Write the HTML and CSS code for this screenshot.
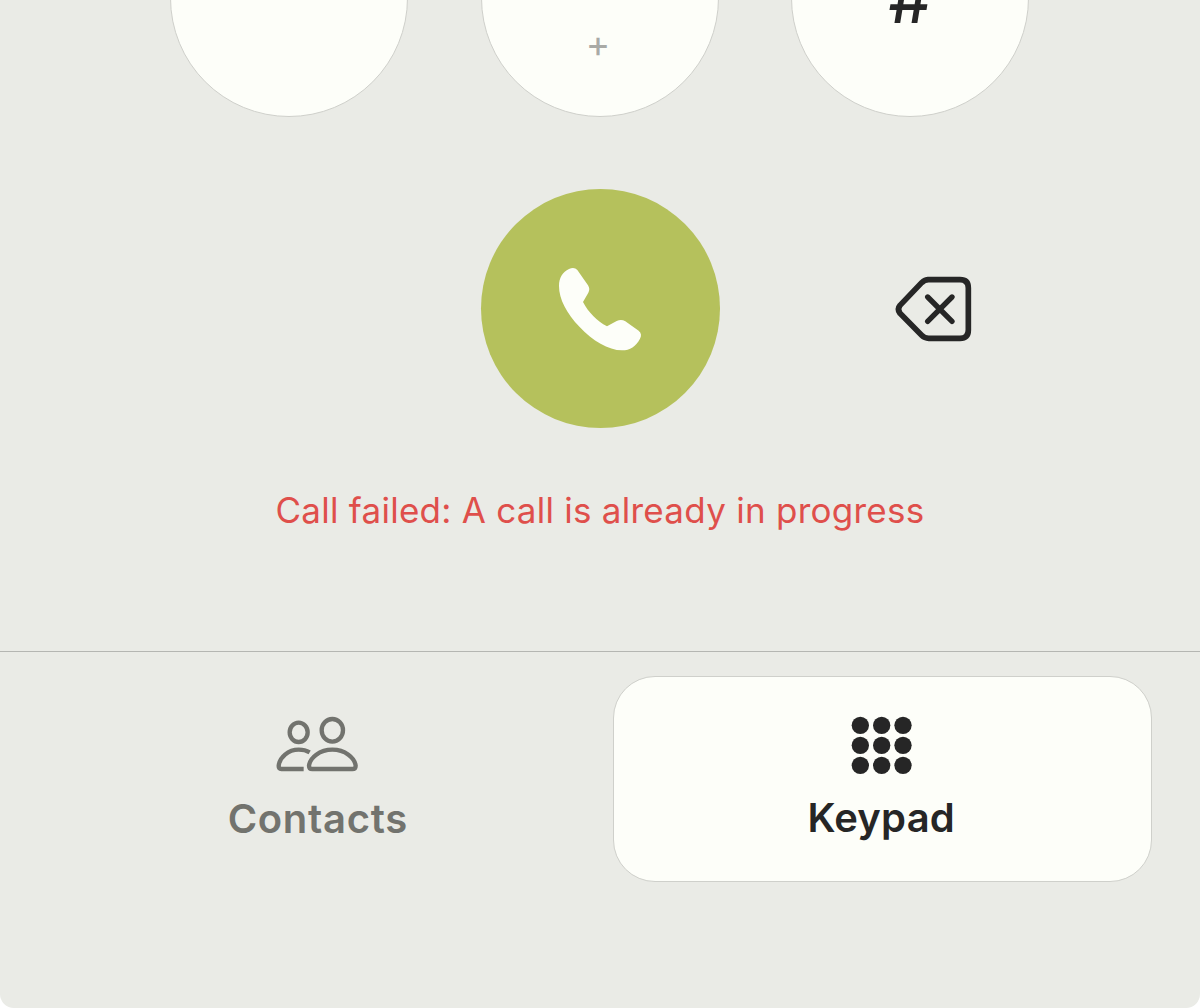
FILE: index.html
```html
<!DOCTYPE html>
<html lang="en">
<head>
  <meta charset="UTF-8" />
  <meta name="viewport" content="width=device-width, initial-scale=1.0" />
  <title>Keypad</title>
  <link rel="stylesheet" href="styles.css">
</head>
<body>

  <div class="phone">
    <div class="dialer">
      <div class="keys">
        <div class="key"></div>
        <div class="key"><span class="plus">+</span></div>
        <div class="key"><span class="hash">#</span></div>
      </div>

      <div class="actions">
        <button class="call-btn" aria-label="Call">
          <svg width="120" height="120" viewBox="0 -3 360 360">
            <path fill="#fdfef9" d="M87 57C97 52 106 53 112 60L144 106C149 114 149 120 145 128L129 156C145 187 171 213 201 229L230 213C240 208 248 209 256 214L296 242C304 248 305 257 300 266C288 289 270 301 246 301C205 301 158 272 119 231C80 191 57 147 57 108C57 83 68 66 87 57Z" />
          </svg>
        </button>
        <button class="delete-btn" aria-label="Delete">
          <svg width="110" height="100" viewBox="0 0 330 300" fill="none" stroke="#262626" stroke-linecap="round" stroke-linejoin="round">
            <path stroke-width="17" d="M143 59H240Q265 59 265 84V210Q265 235 240 235H146Q134 235 125 226L60 160Q50 148 60 136L125 68Q134 59 146 59Z" />
            <path stroke-width="16" d="M143 111L216 184M216 111L143 184" />
          </svg>
        </button>
      </div>

      <div class="error">Call failed: A call is already in progress</div>
    </div>

    <div class="bottom-nav">
      <div class="nav-item">
        <svg width="120" height="90" viewBox="-6 0 360 270" fill="none" stroke="#72736e" stroke-width="13">
          <ellipse cx="116" cy="97" rx="27" ry="29" />
          <ellipse cx="217" cy="91" rx="32" ry="34" />
          <path d="M131 207H64Q56 207 56 198C58 172 85 149 116 149Q135 149 149 157" />
          <path d="M157 207H277Q287 207 287 197C284 173 255 149 217 149S150 173 147 197Q147 207 157 207Z" />
        </svg>
        <div class="label">Contacts</div>
      </div>
      <div class="nav-item active">
        <svg width="100" height="90" viewBox="6 0 300 270" fill="#262626">
          <circle cx="91" cy="76" r="26" />
          <circle cx="155" cy="76" r="26" />
          <circle cx="219" cy="76" r="26" />
          <circle cx="91" cy="136" r="26" />
          <circle cx="155" cy="136" r="26" />
          <circle cx="219" cy="136" r="26" />
          <circle cx="91" cy="196" r="26" />
          <circle cx="155" cy="196" r="26" />
          <circle cx="219" cy="196" r="26" />
        </svg>
        <div class="label">Keypad</div>
      </div>
    </div>
  </div>

</body>
</html>
```

FILE: styles.css
```css
body {
  margin: 0;
  background: #ffffff;
  font-family: Inter, sans-serif;
  color: #262626;
}

.phone {
  height: 1008px;
  background: #eaebe6;
  border-radius: 0 0 14px 14px;
  overflow: hidden;
}

.dialer {
  height: 651px;
  overflow: hidden;
}

/* only the lower half of the last key row is in view */
.keys {
  display: grid;
  grid-template-columns: repeat(3, 238px);
  justify-content: center;
  column-gap: 72.5px;
  margin-top: -121px;
  padding-right: 1px;
}

.key {
  height: 238px;
  box-sizing: border-box;
  border: 1.5px solid #cfd0cb;
  border-radius: 50%;
  background: #fdfef9;
  text-align: center;
}

.plus {
  display: block;
  margin-top: 141px;
  padding-right: 3px;
  font-size: 37px;
  font-weight: 400;
  line-height: 46px;
  color: #a9aaa6;
}

.hash {
  display: block;
  margin-top: 79px;
  font-size: 67px;
  font-weight: 500;
  line-height: 80px;
}

.actions {
  display: grid;
  grid-template-columns: repeat(3, 239px);
  justify-content: center;
  align-items: center;
  column-gap: 72px;
  margin-top: 72px;
}

button {
  border: none;
  padding: 0;
  background: none;
  cursor: pointer;
}

.call-btn {
  grid-column: 2;
  display: flex;
  align-items: center;
  justify-content: center;
  height: 239px;
  border-radius: 50%;
  background: #b5c15c;
}

.delete-btn {
  display: flex;
  justify-content: center;
  padding: 3px 0 0 48px;
}

.error {
  margin-top: 60px;
  text-align: center;
  font-size: 35px;
  line-height: 44px;
  letter-spacing: 0.26px;
  color: #df4f4b;
}

.bottom-nav {
  display: flex;
  gap: 25px;
  padding: 24px 48px 0;
  border-top: 1px solid #b5b6b2;
}

.nav-item {
  flex: 1;
  display: flex;
  flex-direction: column;
  align-items: center;
  height: 206px;
  box-sizing: border-box;
  padding-top: 23px;
  border: 1.5px solid transparent;
  border-radius: 42px;
  color: #72736e;
}

.nav-item.active {
  background: #fdfef9;
  border-color: #cfd0cb;
  color: #262626;
}

.label {
  margin-top: 4px;
  font-size: 40px;
  font-weight: 600;
  line-height: 50px;
  letter-spacing: 0.7px;
}

.active .label {
  margin-top: 3px;
  padding-right: 2px;
  letter-spacing: 0.2px;
}
```
